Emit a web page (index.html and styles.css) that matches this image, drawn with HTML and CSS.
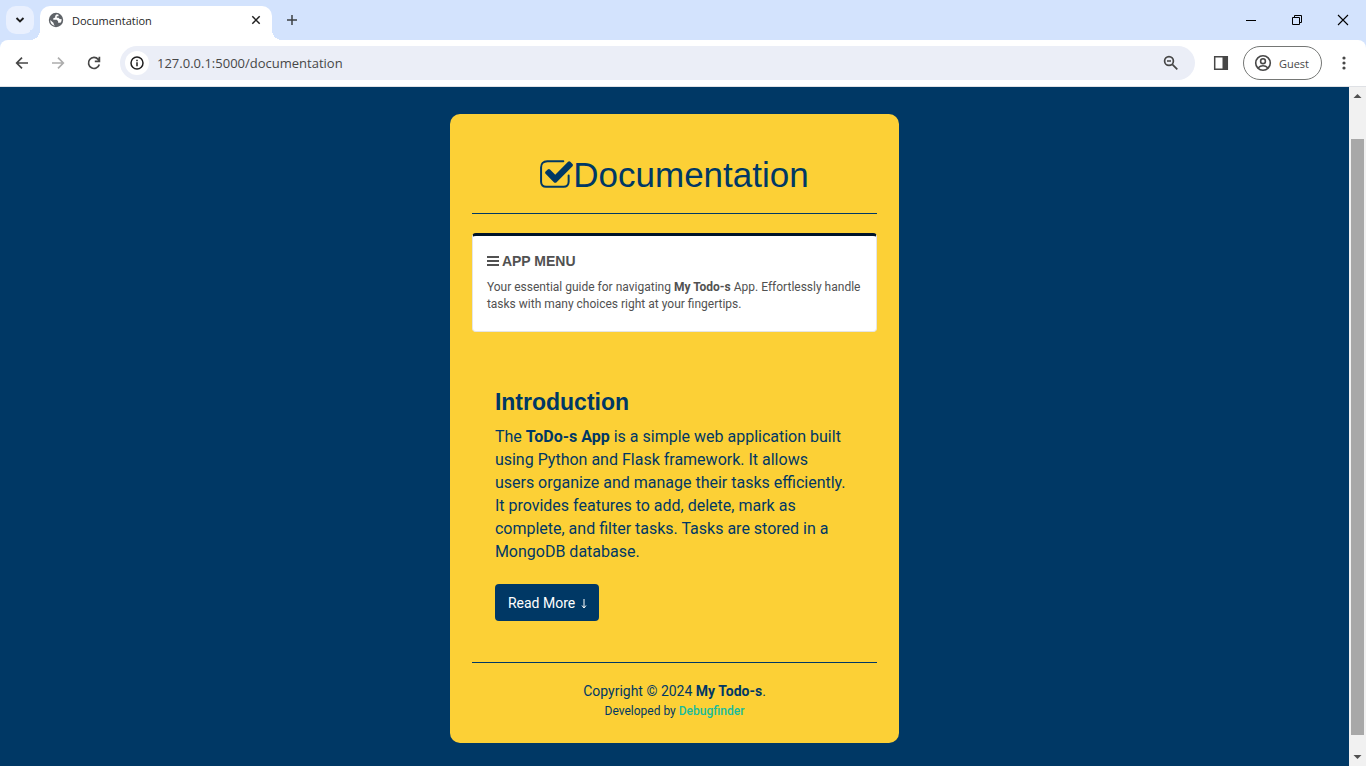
FILE: index.html
```html
<!DOCTYPE html>
<html lang="en">
<head>
<meta charset="utf-8">
<title>Documentation</title>
<link rel="stylesheet" href="styles.css">
</head>
<body>
<header class="browser">
  <div class="tabstrip">
    <button class="tab-search" aria-label="Search tabs"><svg width="10" height="10" viewBox="0 0 10 10"><path d="M1.5 3l3.5 3.5L8.500 3" fill="none" stroke="#1f1f1f" stroke-width="1.900"/></svg></button>
    <div class="tab">
      <svg width="16" height="16" viewBox="0 0 16 16"><circle cx="8" cy="8" r="7.200" fill="#5f6368"/><path d="M8.800 2.300L7.200 3.800v1.600L5.300 6.300v1.500h3.500l1.300 1.500v1.500H12.500A5.700 5.700 0 0 0 13.700 7.200l-2-.1-1.200-1.400h-1.700V4.300h1.700V2.800zM2.300 8l3.300 3.100v1l1.200 1.700A5.800 5.800 0 0 1 2.300 8z" fill="#fff"/></svg>
      <span class="tab-title">Documentation</span>
      <button class="tab-close" aria-label="Close tab"><svg width="10" height="10" viewBox="0 0 10 10"><path d="M1.300 1.300l7.400 7.400M8.700 1.300L1.300 8.700" stroke="#1f1f1f" stroke-width="1.500"/></svg></button>
    </div>
    <button class="new-tab" aria-label="New tab"><svg width="12" height="12" viewBox="0 0 12 12"><path d="M6 1v10M1 6h10" stroke="#3c4043" stroke-width="1.500"/></svg></button>
    <div class="window-buttons">
      <button aria-label="Minimize"><svg width="12" height="12" viewBox="0 0 12 12"><path d="M1 6.500h10" stroke="#000"/></svg></button>
      <button aria-label="Restore"><svg width="12" height="12" viewBox="0 0 12 12"><path d="M1.500 3.500h7v7h-7zM3.500 3.500v-2h7v7h-2" fill="none" stroke="#000"/></svg></button>
      <button aria-label="Close"><svg width="12" height="12" viewBox="0 0 12 12"><path d="M1 1l10 10M11 1L1 11" stroke="#000" stroke-width="1.100"/></svg></button>
    </div>
  </div>
  <div class="toolbar">
    <nav class="nav-buttons">
      <button aria-label="Back"><svg width="16" height="16" viewBox="0 0 16 16"><path d="M14 8H3M8 2.700L2.700 8 8 13.300" fill="none" stroke="#474747" stroke-width="1.700"/></svg></button>
      <button aria-label="Forward"><svg width="16" height="16" viewBox="0 0 16 16"><path d="M2 8h11M8 2.700L13.300 8 8 13.300" fill="none" stroke="#adadad" stroke-width="1.700"/></svg></button>
      <button aria-label="Reload"><svg width="16" height="16" viewBox="0 0 16 16"><path d="M13.300 9.500A5.500 5.500 0 1 1 12.200 4.400L13.500 6M13.400 1.800v4.600H8.800" fill="none" stroke="#474747" stroke-width="1.700"/></svg></button>
    </nav>
    <div class="address">
      <span class="site-info"><svg width="14" height="14" viewBox="0 0 14 14"><circle cx="7" cy="7" r="6" fill="none" stroke="#1f1f1f" stroke-width="1.500"/><path d="M7 6.300v4M7 3.700v1.500" stroke="#1f1f1f" stroke-width="1.500"/></svg></span>
      <input class="url" type="text" aria-label="Address" value="127.0.0.1:5000/documentation">
      <button class="zoom" aria-label="Zoom"><svg width="16" height="16" viewBox="0 0 16 16"><circle cx="6" cy="6" r="4.400" fill="none" stroke="#474747" stroke-width="1.700"/><path d="M9.300 9.300l5 5M4 6h4" stroke="#474747" stroke-width="1.700"/></svg></button>
    </div>
    <button class="side-panel" aria-label="Side panel"><svg width="16" height="16" viewBox="0 0 16 16"><path d="M1.700 1.800h12.600v12.400H1.700z" fill="none" stroke="#474747" stroke-width="1.500"/><path d="M9.500 1.500H14.500v13H9.500z" fill="#474747"/></svg></button>
    <button class="guest"><svg width="18" height="18" viewBox="0 0 18 18" fill="none" stroke="#474747" stroke-width="1.600"><circle cx="9" cy="9" r="7.300"/><circle cx="9" cy="7.200" r="2.400"/><path d="M4 14c1.500-1.500 3-2.200 5-2.200s3.500.7 5 2.200"/></svg>Guest</button>
    <button class="more" aria-label="More"><svg width="4" height="16" viewBox="0 0 4 16" fill="#474747"><circle cx="2" cy="3" r="1.600"/><circle cx="2" cy="8" r="1.600"/><circle cx="2" cy="13" r="1.600"/></svg></button>
  </div>
</header>
<div class="viewport">
  <main class="page">
    <article class="card">
      <h1 class="title"><svg width="33" height="28" viewBox="64 128 1664 1408" fill="none" stroke="#003865"><path d="M1290 175H483q-155 10-235 85t-80 235v717q0 119 68 187t187 68h880q119 0 187-68t68-187V900" transform="translate(-50 10)" stroke-width="100" stroke-linecap="round"/><path fill="#003865" stroke="none" d="M1703 441l-814 814q-24 24-57 24t-57-24l-430-430q-24-24-24-57t24-57l110-110q24-24 57-24t57 24l263 263 647-647q24-24 57-24t57 24l110 110q24 24 24 57t-24 57z"/></svg>Documentation</h1>
      <section class="menu">
        <h2 class="menu-title"><svg width="12" height="12" viewBox="0 0 12 12"><path d="M0 2h12M0 6h12M0 10h12" stroke="#515151" stroke-width="2"/></svg>APP MENU</h2>
        <p class="menu-text">Your essential guide for navigating <b>My Todo-s</b> App. Effortlessly handle tasks with many choices right at your fingertips.</p>
      </section>
      <section class="intro">
        <h2 class="intro-title">Introduction</h2>
        <p class="intro-text">The <b>ToDo-s App</b> is a simple web application built using Python and Flask framework. It allows users organize and manage their tasks efficiently. It provides features to add, delete, mark as complete, and filter tasks. Tasks are stored in a MongoDB database.</p>
        <button class="read-more">Read More <svg width="6" height="10" viewBox="0 0 6 10"><path d="M3 0v8M1 6.500l2 2.500 2-2.500" fill="none" stroke="#fff"/></svg></button>
      </section>
      <footer class="footer">
        <p class="copyright">Copyright © 2024 <b>My Todo-s</b>.</p>
        <p class="developer">Developed by <a href="#">Debugfinder</a></p>
      </footer>
    </article>
  </main>
  <div class="scrollbar">
    <svg width="17" height="17" viewBox="0 0 17 17"><path d="M4.500 11L8.500 7l4 4z" fill="#505050"/></svg>
    <div class="track"><div class="thumb"></div></div>
    <svg width="17" height="17" viewBox="0 0 17 17"><path d="M4.500 6L8.500 10l4-4z" fill="#505050"/></svg>
  </div>
</div>
</body>
</html>
```
FILE: styles.css
```css
* { box-sizing: border-box; }
body {
  margin: 0;
  min-height: 100vh;
  display: flex;
  flex-direction: column;
  font-family: Roboto, sans-serif;
  color: #003865;
}
button {
  border: 0;
  padding: 0;
  background: none;
  font: inherit;
  color: inherit;
  display: flex;
  align-items: center;
  justify-content: center;
}
svg { flex: none; display: block; }
h1, h2, p { margin: 0; }
b { font-weight: 700; }

.browser { background: #d3e3fd; font-family: "Open Sans", sans-serif; }
.tabstrip { display: flex; align-items: center; height: 40px; padding-left: 6px; }
.tab-search { width: 28px; height: 28px; border-radius: 10px; background: #e9f0fe; }
.tab {
  position: relative;
  display: flex;
  align-items: center;
  align-self: flex-end;
  gap: 8px;
  width: 232px;
  height: 34px;
  margin-left: 6px;
  padding: 0 8px 6px;
  border-radius: 10px 10px 0 0;
  background: #fff;
}
.tab::before, .tab::after {
  content: "";
  position: absolute;
  bottom: 0;
  width: 10px;
  height: 10px;
}
.tab::before { right: 100%; background: radial-gradient(circle at 0 0, #d3e3fd 10px, #fff 10px); }
.tab::after { left: 100%; background: radial-gradient(circle at 100% 0, #d3e3fd 10px, #fff 10px); }
.tab-title { flex: 1; font-size: 11px; color: #1f1f1f; }
.tab-close { width: 16px; height: 16px; }
.new-tab { width: 28px; height: 28px; margin-left: 6px; }
.window-buttons { display: flex; margin-left: auto; }
.window-buttons button { width: 46px; height: 30px; }
.toolbar {
  display: flex;
  align-items: center;
  height: 47px;
  padding-right: 20px;
  background: #fff;
  border-bottom: 1px solid #dfe1e5;
  border-radius: 8px 8px 0 0;
}
.nav-buttons { display: flex; gap: 20px; padding: 0 18px 0 14px; }
.address {
  flex: 1;
  display: flex;
  align-items: center;
  height: 34px;
  padding: 0 16px 0 5px;
  border-radius: 17px;
  background: #ebeef7;
}
.site-info {
  display: flex;
  align-items: center;
  justify-content: center;
  width: 24px;
  height: 24px;
  border-radius: 50%;
  background: #fff;
}
.url {
  flex: 1;
  min-width: 0;
  padding: 0 8px;
  border: 0;
  background: none;
  font: 13px "Open Sans", sans-serif;
  color: #474747;
}
.side-panel { margin: 0 14px 0 18px; }
.guest {
  gap: 7px;
  height: 34px;
  padding: 0 12px 0 10px;
  border: 1px solid #757775;
  border-radius: 17px;
  font-size: 11px;
  color: #474747;
}
.more { margin-left: 20px; width: 4px; }

.viewport { flex: 1; display: flex; background: #003865; }
.page { flex: 1; padding: 27px 0 23px; }
.card {
  width: 33.3%;
  min-width: 420px;
  margin: 0 auto;
  padding: 34px 22px 23px;
  border-radius: 10px;
  background: #fcd036;
}
.title {
  display: flex;
  align-items: center;
  justify-content: center;
  padding-bottom: 11px;
  border-bottom: 1px solid #003865;
  font: 400 35px/54px "Liberation Sans", Arial, sans-serif;
}
.title svg { margin-bottom: 3px; }
.menu {
  margin-top: 19px;
  padding: 15px 14px 18px;
  border: 1px solid #e5e5e5;
  border-top: 3px solid #00142a;
  border-radius: 4px;
  background: #fff;
  color: #515151;
}
.menu-title {
  display: flex;
  align-items: center;
  gap: 3px;
  font: 700 14px/20px "Liberation Sans", Arial, sans-serif;
}
.menu-text { margin-top: 8px; font-size: 12px; line-height: 17px; }
.intro { padding: 56px 28px 41px 23px; }
.intro-title { font: 700 23px/28px "Liberation Sans", Arial, sans-serif; }
.intro-text { margin-top: 9px; font-size: 16px; line-height: 23px; }
.read-more {
  gap: 6px;
  height: 37px;
  margin-top: 21px;
  padding: 0 12px 0 13px;
  border-radius: 4px;
  background: #003865;
  color: #fff;
  font-size: 14px;
}
.read-more svg { margin-top: 3px; }
.footer { padding-top: 17px; border-top: 1px solid #003865; text-align: center; }
.copyright { font-size: 14px; line-height: 22px; }
.developer { font-size: 12px; line-height: 18px; }
.developer a { color: #18bc9c; font-weight: 500; text-decoration: none; }

.scrollbar { display: flex; flex-direction: column; width: 17px; background: #f1f1f1; }
.track { flex: 1; padding: 35px 2px 14px; display: flex; }
.thumb { flex: 1; background: #a8a8a8; }
```
